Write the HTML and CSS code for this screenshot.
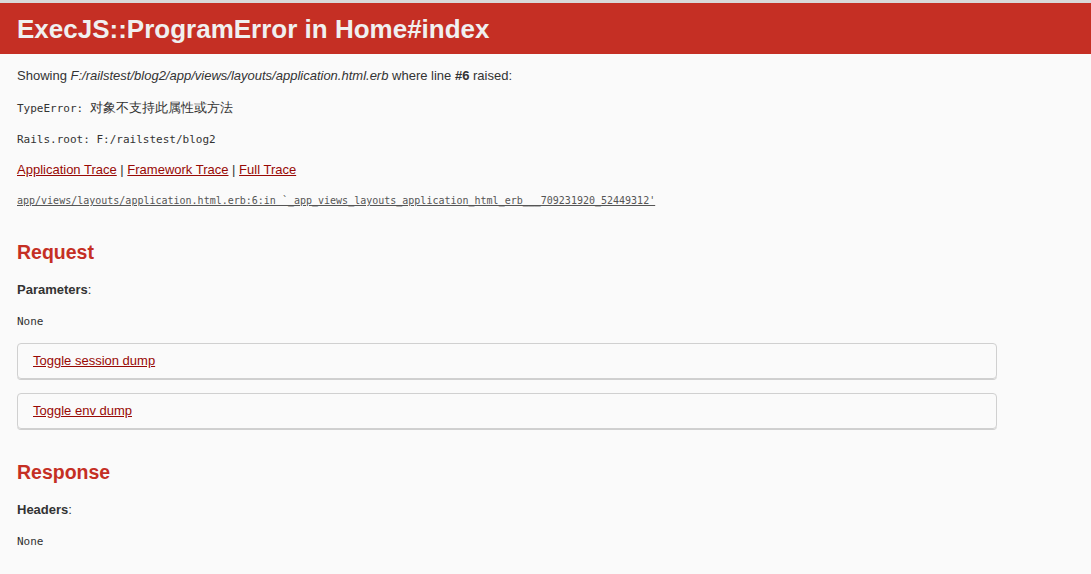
FILE: index.html
```
<!DOCTYPE html>
<html lang="en">
<head>
    <meta charset="UTF-8">
    <title>Action Controller: Exception caught</title>
    <link rel="stylesheet" href="styles.css">
</head>
<body>
    <header>
        <h1>ExecJS::ProgramError in Home#index</h1>
    </header>

    <div id="container">
        <p class="showing">
            Showing <i>F:/railstest/blog2/app/views/layouts/application.html.erb</i> where line <b>#6</b> raised:
        </p>

        <pre class="message"><code>TypeError: <span class="cjk">对象不支持此属性或方法</span></code></pre>

        <pre class="root"><code>Rails.root: F:/railstest/blog2</code></pre>

        <p class="trace-links">
            <a href="#">Application Trace</a> |
            <a href="#">Framework Trace</a> |
            <a href="#">Full Trace</a>
        </p>

        <pre class="trace"><code><a href="#">app/views/layouts/application.html.erb:6:in `_app_views_layouts_application_html_erb___709231920_52449312'</a></code></pre>

        <h2 class="section first">Request</h2>
        <p class="label"><b>Parameters</b>:</p>
        <pre class="dump"><code>None</code></pre>

        <div class="details">
            <a class="summary" href="#">Toggle session dump</a>
        </div>
        <div class="details">
            <a class="summary" href="#">Toggle env dump</a>
        </div>

        <h2 class="section">Response</h2>
        <p class="label"><b>Headers</b>:</p>
        <pre class="dump"><code>None</code></pre>
    </div>
</body>
</html>
```

FILE: styles.css
```
body {
    background-color: #fafafa;
    color: #333;
    margin: 0;
    border-top: 3px solid #d9d9d9;
    font-family: "Liberation Sans", Arial, sans-serif;
    font-size: 13px;
    line-height: 18px;
}

p {
    margin: 0;
}

pre {
    margin: 0;
    font-family: "Liberation Mono", "Noto Sans CJK SC", monospace;
    font-size: 11px;
    line-height: 18px;
    white-space: pre-wrap;
}

a {
    color: #980905;
}

header {
    color: #f0f0f0;
    background: #c52f24;
    padding: 12px 17px 10px;
}

h1 {
    margin: 0;
    font-size: 26px;
    line-height: 29px;
}

#container {
    padding: 0 17px;
}

.showing {
    margin-top: 13px;
}

.message {
    margin-top: 14px;
}

.message .cjk {
    font-size: 13px;
}

.root {
    margin-top: 13px;
}

.trace-links {
    margin-top: 12px;
}

.trace {
    margin-top: 13px;
    font-size: 10px;
}

.trace a {
    color: #555;
}

h2 {
    color: #c52f24;
    font-size: 19.5px;
    line-height: 25px;
    margin: 0;
}

h2.section {
    margin-top: 31px;
}

h2.first {
    margin-top: 29px;
}

.label {
    margin-top: 16px;
}

.dump {
    margin-top: 14px;
}

.details {
    width: 978px;
    border: 1px solid #d0d0d0;
    border-radius: 4px;
    box-shadow: 0 1px 0 #cfcfcf;
    margin-top: 12px;
}

.details + .details {
    margin-top: 14px;
}

.summary {
    display: block;
    padding: 8px 15px;
}
```
